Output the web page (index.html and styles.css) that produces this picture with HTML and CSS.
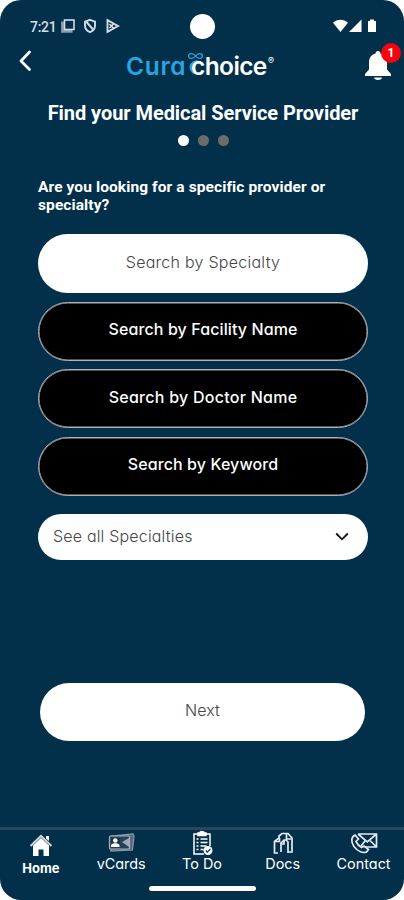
FILE: index.html
```html
<!DOCTYPE html>
<html lang="en">
<head>
<meta charset="utf-8">
<title>Curachoice</title>
<link rel="stylesheet" href="styles.css">
</head>
<body>
<div class="phone">
  <div class="status">
    <span class="clock">7:21</span>
    <svg class="status-left" viewBox="0 0 60 16" width="60" height="16" fill="none" stroke="#d5dbe4">
      <path d="M1.500 3.500V13.300H11.500" stroke="#8e9db0" stroke-width="2.800"/><rect x="3.500" y="2" width="9.500" height="9.500" stroke-width="1.600"/>
      <path d="M29 1.800l5 1.900v4c0 3.300-2.200 5.400-5 6.500-2.800-1.100-5-3.200-5-6.500v-4z" stroke-width="1.900"/><path d="M25.500 4l7 8" stroke-width="1.900"/>
      <path d="M46.500 2.200v11.600L57 8z" stroke-width="1.900"/><path d="M48.500 6l4 4M48.500 10l4-4" stroke-width="1.700"/>
    </svg>
    <span class="camera"></span>
    <svg class="status-right" viewBox="0 0 44 14" width="44" height="14" fill="#fff">
      <path d="M0 3.800C4-.2 11-.2 15 3.800L7.500 13zM16 13L28.500.5V13zM35 2h2V.5h4V2h2v11h-8z"/>
    </svg>
  </div>
  <header class="header">
    <svg class="back" viewBox="0 0 16 24" width="16" height="24"><path d="M12.500 3L4 12l8.500 8.500" fill="none" stroke="#fff" stroke-width="2.800" stroke-linecap="round" stroke-linejoin="round"/></svg>
    <div class="logo"><span class="cura">Cura</span><span class="choice">choice</span><span class="reg">®</span>
      <svg class="loop" viewBox="0 0 18 26" width="18" height="26" fill="none" stroke="#2aa4dc"><path d="M9.500 4C7.500.9 2.500.9 2.500 4s5 3.100 7 0 7-3.100 7 0-5 3.100-7 0z" stroke-width="1.300"/><path d="M14 11.200A5.400 5.400 0 1 0 9 20.500" stroke-width="3.200"/></svg>
    </div>
    <div class="bell">
      <svg viewBox="0 0 26 31" width="26" height="31" fill="#fff"><path d="M13 1c-1.700 0-2.400 1-2.400 2.400C6 4.500 4 8.200 4 12.500v7L0 24v2h26v-2l-4-4.500v-7c0-4.300-2-8-6.600-9.100C15.400 2 14.700 1 13 1zM9 27.500h8c0 1.600-1.700 2.500-4 2.500s-4-.9-4-2.500z"/></svg>
      <span class="badge">1</span>
    </div>
  </header>
  <main class="content">
    <h1>Find your Medical Service Provider</h1>
    <div class="dots"><i class="on"></i><i></i><i></i></div>
    <p class="question">Are you looking for a specific provider or specialty?</p>
    <div class="options">
      <div class="pill light"><span class="wide">Search by Specialty</span></div>
      <div class="pill dark"><span>Search by Facility Name</span></div>
      <div class="pill dark"><span class="wide">Search by Doctor Name</span></div>
      <div class="pill dark"><span>Search by Keyword</span></div>
    </div>
    <div class="select"><span>See all Specialties</span>
      <svg viewBox="0 0 14 9" width="14" height="9"><path d="M1.200 1.500L7 7.300l5.800-5.800" fill="none" stroke="#111" stroke-width="1.800"/></svg>
    </div>
    <div class="pill light next"><span>Next</span></div>
  </main>
  <nav class="nav">
    <div class="tab active">
      <svg viewBox="0 0 24 24" width="24" height="24" fill="#fff"><path d="M4 12.500l8-7.500 8 7.500V23h-5.500v-6.500h-5V23H4z"/><path d="M1.500 13L12 3l10.500 10" fill="none" stroke="#cfd5dc" stroke-width="2"/><path d="M17 3h3v5l-3-2.500z"/></svg>
      <span>Home</span>
    </div>
    <div class="tab">
      <svg viewBox="0 0 28 24" width="28" height="24"><path d="M4 5l22-2 1 2-1.500 14L4 20z" fill="#53697d" stroke="#8d9aa8" stroke-width="1.200"/><rect x="2.500" y="5" width="20" height="13" rx="1" fill="#26415a" stroke="#a8b2be" stroke-width="1.200"/><path d="M4 7h9v9H4z" fill="#17344c"/><circle cx="8.300" cy="9.500" r="2.300" fill="#fff"/><path d="M4 16v-2c1-2.500 7.500-2.500 8.500 0v2z" fill="#fff"/><path d="M22 7l-7 4 7 5z" fill="#9ca9b6"/></svg>
      <span>vCards</span>
    </div>
    <div class="tab todo">
      <svg viewBox="0 0 24 26" width="24" height="26" fill="none" stroke="#fff" stroke-width="1.500"><path d="M8 4H4v20h10M16 4h4v12"/><path d="M8 5.500V3h2c0-2 4-2 4 0h2v2.500z" fill="#fff"/><path d="M6.500 9h2M10.500 9h7M6.500 12.500h2M10.500 12.500h7M6.500 16h2M10.500 16h6M6.500 19.500h2M10.500 19.500h3"/><circle cx="18" cy="20.500" r="4.500" fill="#fff" stroke="none"/><path d="M15.800 20.500l1.600 1.600 3-3.200" stroke="#02304a" stroke-width="1.200"/></svg>
      <span>To Do</span>
    </div>
    <div class="tab">
      <svg viewBox="0 0 24 24" width="24" height="24" fill="none" stroke="#e6eaf0" stroke-width="1.700"><path d="M7 22H3.500V10.500L8 7M8 7V5l3-2.500h6l4 4.500v14h-4"/><path d="M4 10.500h4.500V7M10 21V12l3-3h2l2 2v11M13 9v4h-3M15.500 3v5h5"/></svg>
      <span>Docs</span>
    </div>
    <div class="tab">
      <svg viewBox="0 0 28 24" width="28" height="24" fill="none" stroke="#e6eaf0" stroke-width="1.700"><path d="M8 3h18.500v13H15M8 3l9.300 8L26.500 3M11 15l4-5M26.500 16l-7-7"/><path d="M5 4C1 6 .8 11 4 15.500c3.500 4.500 8.500 7 12.500 5.500l2-2.500-4.500-3.500-2.500 1.500C9 15 7 12.500 6 10.500L8.500 8z"/></svg>
      <span>Contact</span>
    </div>
  </nav>
  <div class="home-bar"></div>
</div>
</body>
</html>
```
FILE: styles.css
```css
* { box-sizing: border-box; }
body { margin: 0; background: #fff; }
.phone {
  width: 404px; height: 900px; overflow: hidden;
  display: flex; flex-direction: column;
  background: #02304a; border-radius: 21px;
  color: #fff; font-family: Inter, "Open Sans", sans-serif;
  font-feature-settings: "cv11";
}
.status { height: 46px; padding: 7px 27px 0 30px; display: grid; grid-template-columns: 31px 129px 1fr auto; align-items: center; }
.clock { font: 500 14px Roboto, sans-serif; color: #d5dbe4; letter-spacing: -0.3px; }
.camera { width: 25px; height: 25px; border-radius: 50%; background: #fff; }
.status-left, .status-right { position: relative; top: -0.5px; }
.header { height: 50px; padding: 0 12px 0 17px; display: grid; grid-template-columns: 109px 1fr 27px; }
.back { margin-top: 3px; }
.logo { position: relative; display: flex; height: 40px; font-size: 24.5px; line-height: 41px; }
.cura { color: #2aa4dc; font-weight: 600; width: 65px; letter-spacing: 0.7px; }
.choice { position: relative; z-index: 1; font-weight: 600; width: 77px; letter-spacing: -0.6px; }
.reg { font-size: 9px; line-height: 29px; }
.loop { position: absolute; left: 60px; top: 6px; }
.bell { position: relative; padding-top: 4px; }
.badge {
  position: absolute; left: 16px; top: -3px; width: 20px; height: 20px; border-radius: 50%;
  background: #f5020d; text-align: center; font: 700 12px/20px Roboto, sans-serif;
}
.content { height: 731px; padding: 0 36px 0 38px; }
h1 { margin: 3px -20px 0; text-align: center; white-space: nowrap; font: 700 20px/28px Roboto, sans-serif; letter-spacing: -0.06px; }
.dots { display: flex; justify-content: center; gap: 9px; margin-top: 8px; }
.dots i { width: 11px; height: 11px; border-radius: 50%; background: #6c6c6c; }
.dots .on { background: #fff; }
.question { margin: 32px 0 0; font: 700 15.5px/18px Roboto, sans-serif; letter-spacing: 0.1px; width: 300px; }
.options { display: grid; gap: 8.5px; margin-top: 20px; }
.pill { height: 59px; border-radius: 30px; display: flex; align-items: center; justify-content: center; font-size: 16px; letter-spacing: 0.1px; padding-bottom: 4px; white-space: nowrap; }
.wide { letter-spacing: 0.26px; }
.light { background: #fff; color: #444; font-weight: 300; }
.dark { background: #000; border: 1px solid #b5b0b8; box-shadow: inset 0 0 0 0.5px #aaa5ae; font-weight: 500; }
.select { height: 46px; margin-top: 18px; border-radius: 23px; background: #fff; color: #444; font-size: 16px; letter-spacing: 0.18px; font-weight: 300; display: flex; align-items: center; justify-content: space-between; padding: 0 19px 1px 15px; }
.next { margin: 123.5px 3px 0 2px; height: 58px; }
.nav { height: 55px; border-top: 3px solid #2a465e; display: grid; grid-template-columns: repeat(5, 1fr); padding-top: 1px; }
.tab { display: flex; flex-direction: column; align-items: center; font-size: 14.4px; height: 42px; justify-content: space-between; line-height: 18px; }
.tab svg { flex: none; }
.todo svg { margin: -1px 0; }
.active { font-weight: 700; font-size: 13px; height: 46px; padding: 2px 0 0 1px; }
.home-bar { width: 107px; height: 5px; border-radius: 3px; background: #fff; margin: 4px auto 0; }
```
